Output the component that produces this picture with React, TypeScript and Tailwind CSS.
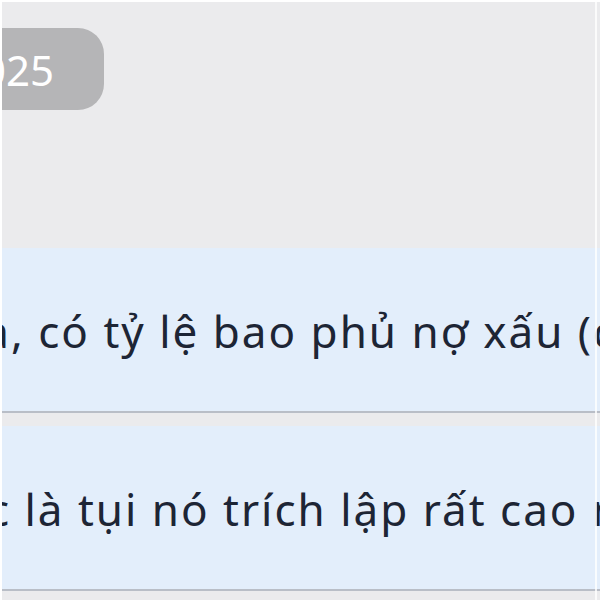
import React from 'react';

const rows = [
  { before: 'Ngân hàng lớn nhất nước ta', after: ',\u00a0có tỷ lệ bao phủ nợ xấu (cao nhất ngành)' },
  { before: 'Lý do chính xác', after: '\u00a0là tụi nó trích lập rất cao nên lợi nhuận thấp' },
];

const MessageRow: React.FC<{ before: string; after: string }> = ({ before, after }) => (
  <div className="h-[165px] bg-[#e3eefb] border-b-2 border-[#b9bec7] flex items-center">
    <div className="flex items-baseline whitespace-nowrap text-[44px] tracking-[2px] text-[#1d2535] pt-[2px]">
      <div className="w-[9px] shrink-0 flex justify-end">
        <span className="shrink-0">{before}</span>
      </div>
      <span>{after}</span>
    </div>
  </div>
);

export default function App() {
  return (
    <div
      className="relative w-[600px] h-[600px] overflow-hidden bg-[#ebebed] border-t-2 border-l-2 border-white"
      style={{ fontFamily: '"Noto Sans", "Open Sans", sans-serif' }}
    >
      <div className="h-[246px] pt-[26px]">
        <div className="w-[102px] flex justify-end">
          <div className="shrink-0 h-[82px] rounded-[26px] bg-[#b5b5b7] text-white text-[42px] flex items-center pl-[30px] pr-[50px] whitespace-nowrap">
            12/05/2025
          </div>
        </div>
      </div>
      <div className="flex flex-col gap-[13px]">
        {rows.map((r, i) => (
          <MessageRow key={i} before={r.before} after={r.after} />
        ))}
      </div>
      {/* window edge */}
      <div className="absolute top-0 bottom-0 left-[593px] w-[2px] bg-white/80 pointer-events-none" />
    </div>
  );
}
